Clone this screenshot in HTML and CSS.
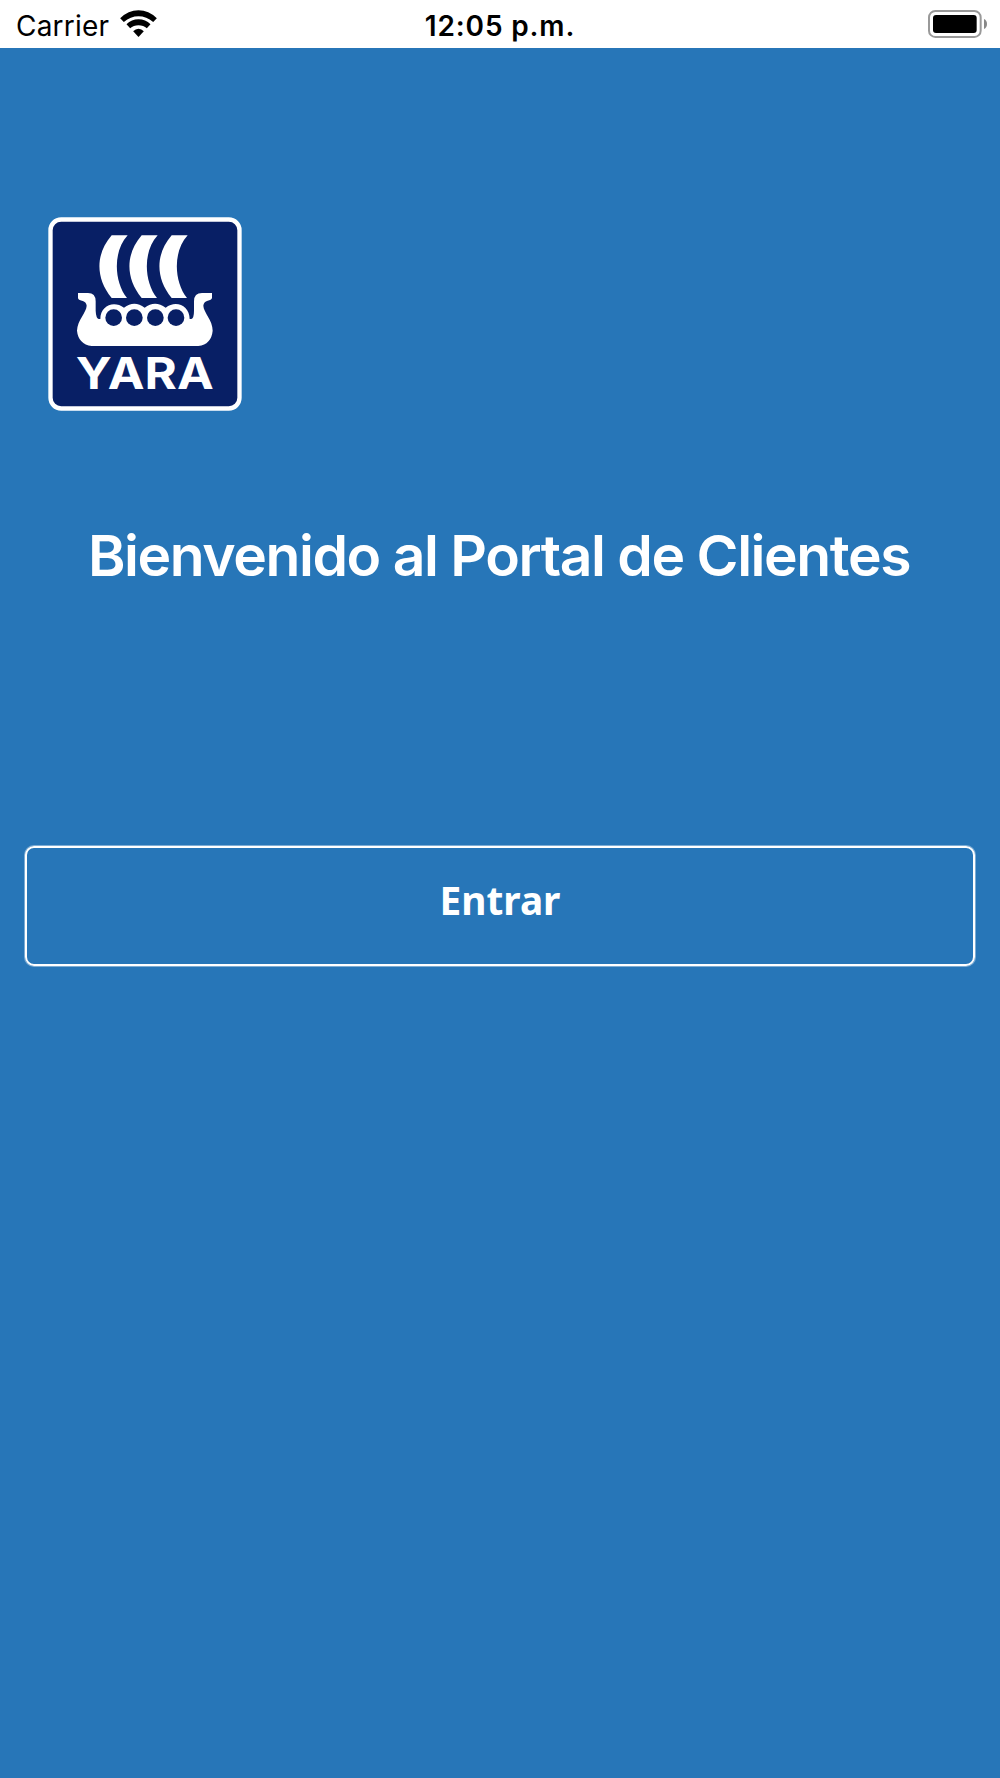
FILE: index.html
```html
<!DOCTYPE html>
<html lang="es">
<head>
    <meta charset="UTF-8">
    <meta name="viewport" content="width=device-width, initial-scale=1.0">
    <title>Portal de Clientes</title>
    <link rel="stylesheet" href="styles.css">
</head>
<body>
    <div class="status-bar">
        <div class="carrier">
            <span class="carrier-name">Carrier</span>
            <svg class="wifi" viewBox="0 0 110 84">
                <path d="M0 25Q24 1 55 1T110 25L99 36Q79 19 55 19T11 36Z"/>
                <path d="M19 43Q34 28 55 28T91 43L80 55Q70 46 55 46T30 55Z"/>
                <path d="M39 64Q46 56 55 56T71 64L55 81Z"/>
            </svg>
        </div>
        <div class="time">12:05 p.m.</div>
        <div class="status-right">
            <svg class="battery" viewBox="0 0 180 84">
                <rect x="3" y="3" width="155" height="78" rx="19" fill="none" stroke="#999" stroke-width="6"/>
                <rect x="15" y="15" width="131" height="54" rx="9" fill="#000"/>
                <path d="M168 27 Q177 31 177 42 Q177 53 168 57Z" fill="#888"/>
            </svg>
        </div>
    </div>
    <main class="welcome">
        <svg class="logo" viewBox="24 21 582 582">
            <rect x="31.5" y="28.5" width="567" height="567" rx="32" fill="#081f65" stroke="#fff" stroke-width="13"/>
            <!-- sails -->
            <g fill="#fff">
                <path id="sail" d="M215 76H263C219 123 221 213 261 264H215C166 204 166 133 215 76Z"/>
                <use href="#sail" x="90"/>
                <use href="#sail" x="180"/>
            </g>
            <!-- hull -->
            <path fill="#fff" d="M114 249H144Q167 249 167 274V302Q168 324 176 327H181C181 286 222 270 252 293Q283 270 314 293Q345 270 377 293C408 269 449 287 449 327H454Q462 324 462 302V274Q462 249 486 249H516V264Q514 271 503 272Q491 275 490 287C491 308 518 330 518 362Q514 403 475 408H155Q115 402 111 362C112 330 139 308 140 287Q139 275 126 272Q115 271 114 264Z"/>
            <g fill="#081f65">
                <circle cx="221" cy="323" r="25"/>
                <circle cx="283" cy="323" r="25"/>
                <circle cx="346" cy="323" r="25"/>
                <circle cx="408" cy="323" r="25"/>
            </g>
            <text class="logo-text" x="107" y="536" textLength="414" lengthAdjust="spacingAndGlyphs">YARA</text>
        </svg>
        <h1>Bienvenido al Portal de Clientes</h1>
        <button class="enter">Entrar</button>
    </main>
</body>
</html>
```

FILE: styles.css
```css
body {
    margin: 0;
    min-height: 100vh;
    display: flex;
    flex-direction: column;
    background-color: #2776b8;
    font-family: Inter, "Liberation Sans", sans-serif;
}
.status-bar {
    box-sizing: border-box;
    height: 48px;
    padding: 3px 12px 0;
    display: grid;
    grid-template-columns: 1fr auto 1fr;
    align-items: center;
    background-color: #fff;
    color: #000;
    font-size: 28px;
    line-height: 45px;
}
.carrier {
    display: flex;
    align-items: center;
    gap: 11px;
    padding-left: 4px;
}
.carrier-name {
    padding-top: 1px;
    letter-spacing: 0.2px;
}
.wifi {
    width: 37px;
    height: 28px;
    margin-bottom: 5px;
}
.time {
    padding-top: 1px;
    font-weight: 600;
    letter-spacing: 0.85px;
}
.status-right {
    display: flex;
    justify-content: flex-end;
}
.battery {
    width: 60px;
    height: 28px;
    margin-bottom: 5px;
}
.welcome {
    flex: 1;
    display: flex;
    flex-direction: column;
    padding: 169px 25px 0;
    color: #fff;
}
.logo {
    width: 194px;
    height: 194px;
    margin-left: 23px;
}
.logo-text {
    fill: #fff;
    font-family: Inter, "Liberation Sans", sans-serif;
    font-size: 133px;
    font-weight: 700;
}
h1 {
    margin: 110px 0 0;
    padding-right: 2px;
    text-align: center;
    font-size: 57px;
    font-weight: 600;
    line-height: 70px;
    letter-spacing: -1.45px;
    white-space: nowrap;
}
.enter {
    height: 120px;
    margin-top: 255px;
    padding: 0 0 13px;
    border: 2px solid #fff;
    border-radius: 9px;
    box-shadow: 0 0 0 1px rgba(255, 255, 255, 0.4);
    background: none;
    color: #fff;
    font-family: "Noto Sans", "Open Sans", sans-serif;
    font-size: 38.8px;
    font-weight: 700;
}
```
